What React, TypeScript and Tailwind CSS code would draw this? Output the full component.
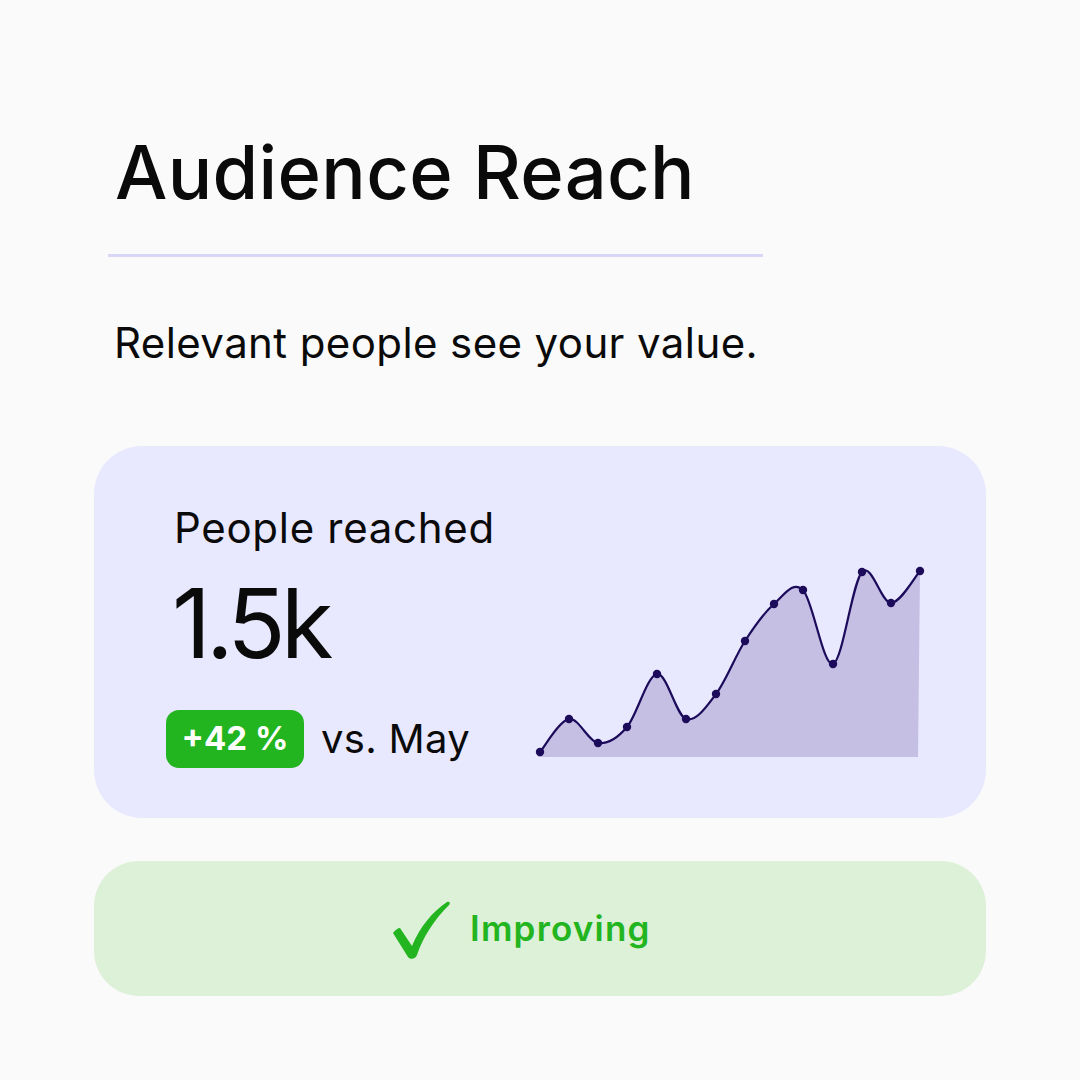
import React from "react";

const pts: [number, number][] = [
  [5, 190], [34, 157], [63, 181], [92, 165], [122, 112], [151, 157], [181, 132],
  [210, 79], [239, 42], [268, 28], [298, 102], [327, 10], [356, 41], [385, 9],
];

function smoothPath(p: [number, number][]) {
  let d = `M${p[0][0]},${p[0][1]}`;
  for (let i = 0; i < p.length - 1; i++) {
    const p0 = p[i - 1] || p[i];
    const p1 = p[i];
    const p2 = p[i + 1];
    const p3 = p[i + 2] || p2;
    const t = 1 / 6;
    const c1x = p1[0] + (p2[0] - p0[0]) * t;
    const c1y = p1[1] + (p2[1] - p0[1]) * t;
    const c2x = p2[0] - (p3[0] - p1[0]) * t;
    const c2y = p2[1] - (p3[1] - p1[1]) * t;
    d += ` C${c1x.toFixed(1)},${c1y.toFixed(1)} ${c2x.toFixed(1)},${c2y.toFixed(1)} ${p2[0]},${p2[1]}`;
  }
  return d;
}

function Chart() {
  const line = smoothPath(pts);
  const area = `${line} L383,195 L3,195 Z`;
  return (
    <svg width="392" height="200" viewBox="0 0 392 200" className="block">
      <path d={area} fill="#c5bfe3" />
      <path d={line} fill="none" stroke="#1c0a5a" strokeWidth="2.2" />
      {pts.map(([x, y], i) => (
        <circle key={i} cx={x} cy={y} r="4.2" fill="#1c0a5a" />
      ))}
    </svg>
  );
}

function Check() {
  return (
    <svg width="60" height="62" viewBox="0 0 60 62" className="block">
      <path
        d="M1,34 C3,31 6,29 8,29 L20,47 C28,28 40,13 55,3 C57,2 59,4 57,6 C42,21 31,38 25,56 C24,60 18,61 16,58 Z"
        fill="#22b520"
      />
    </svg>
  );
}

export default function App() {
  return (
    <div
      className="w-[1080px] h-[1080px] bg-[#fafafa] text-[#0a0a0a] overflow-hidden"
      style={{ fontFamily: "Inter, 'Noto Sans', sans-serif" }}
    >
      <div className="pt-[129px] pl-[115px]">
        <h1 className="text-[74px] leading-[87px] font-medium tracking-[0.3px]">Audience Reach</h1>
      </div>
      <div className="ml-[108px] mt-[38px] w-[655px] h-[3px] bg-[#d9d7f7]" />
      <p className="ml-[114px] mt-[59px] text-[42px] leading-[54px] font-normal tracking-[0.4px]">
        Relevant people see your value.
      </p>
      <div className="ml-[94px] mt-[76px] w-[892px] h-[372px] rounded-[48px] bg-[#e8e8fe] flex">
        <div className="pl-[80px] w-[441px] pt-[58px] flex flex-col">
          <div className="text-[42px] leading-[48px] tracking-[0.7px]">People reached</div>
          <div className="mt-[26px] text-[96px] leading-[90px] font-normal tracking-[-5px] -ml-[2px]">1.5k</div>
          <div className="mt-[42px] -ml-[8px] flex items-center gap-[17px]">
            <div className="w-[138px] h-[58px] rounded-[13px] bg-[#22b520] text-white text-[33px] font-bold flex items-center justify-center">
              +42 %
            </div>
            <div className="text-[40px] leading-[48px] tracking-[0.3px]">vs. May</div>
          </div>
        </div>
        <div className="pt-[116px]">
          <Chart />
        </div>
      </div>
      <div className="ml-[94px] mt-[43px] w-[892px] h-[135px] rounded-[45px] bg-[#ddf0d8] flex items-center pl-[298px] gap-[18px]">
        <div className="mt-[2px]">
          <Check />
        </div>
        <div className="text-[35px] font-semibold text-[#22b520] tracking-[1.2px]">Improving</div>
      </div>
    </div>
  );
}
